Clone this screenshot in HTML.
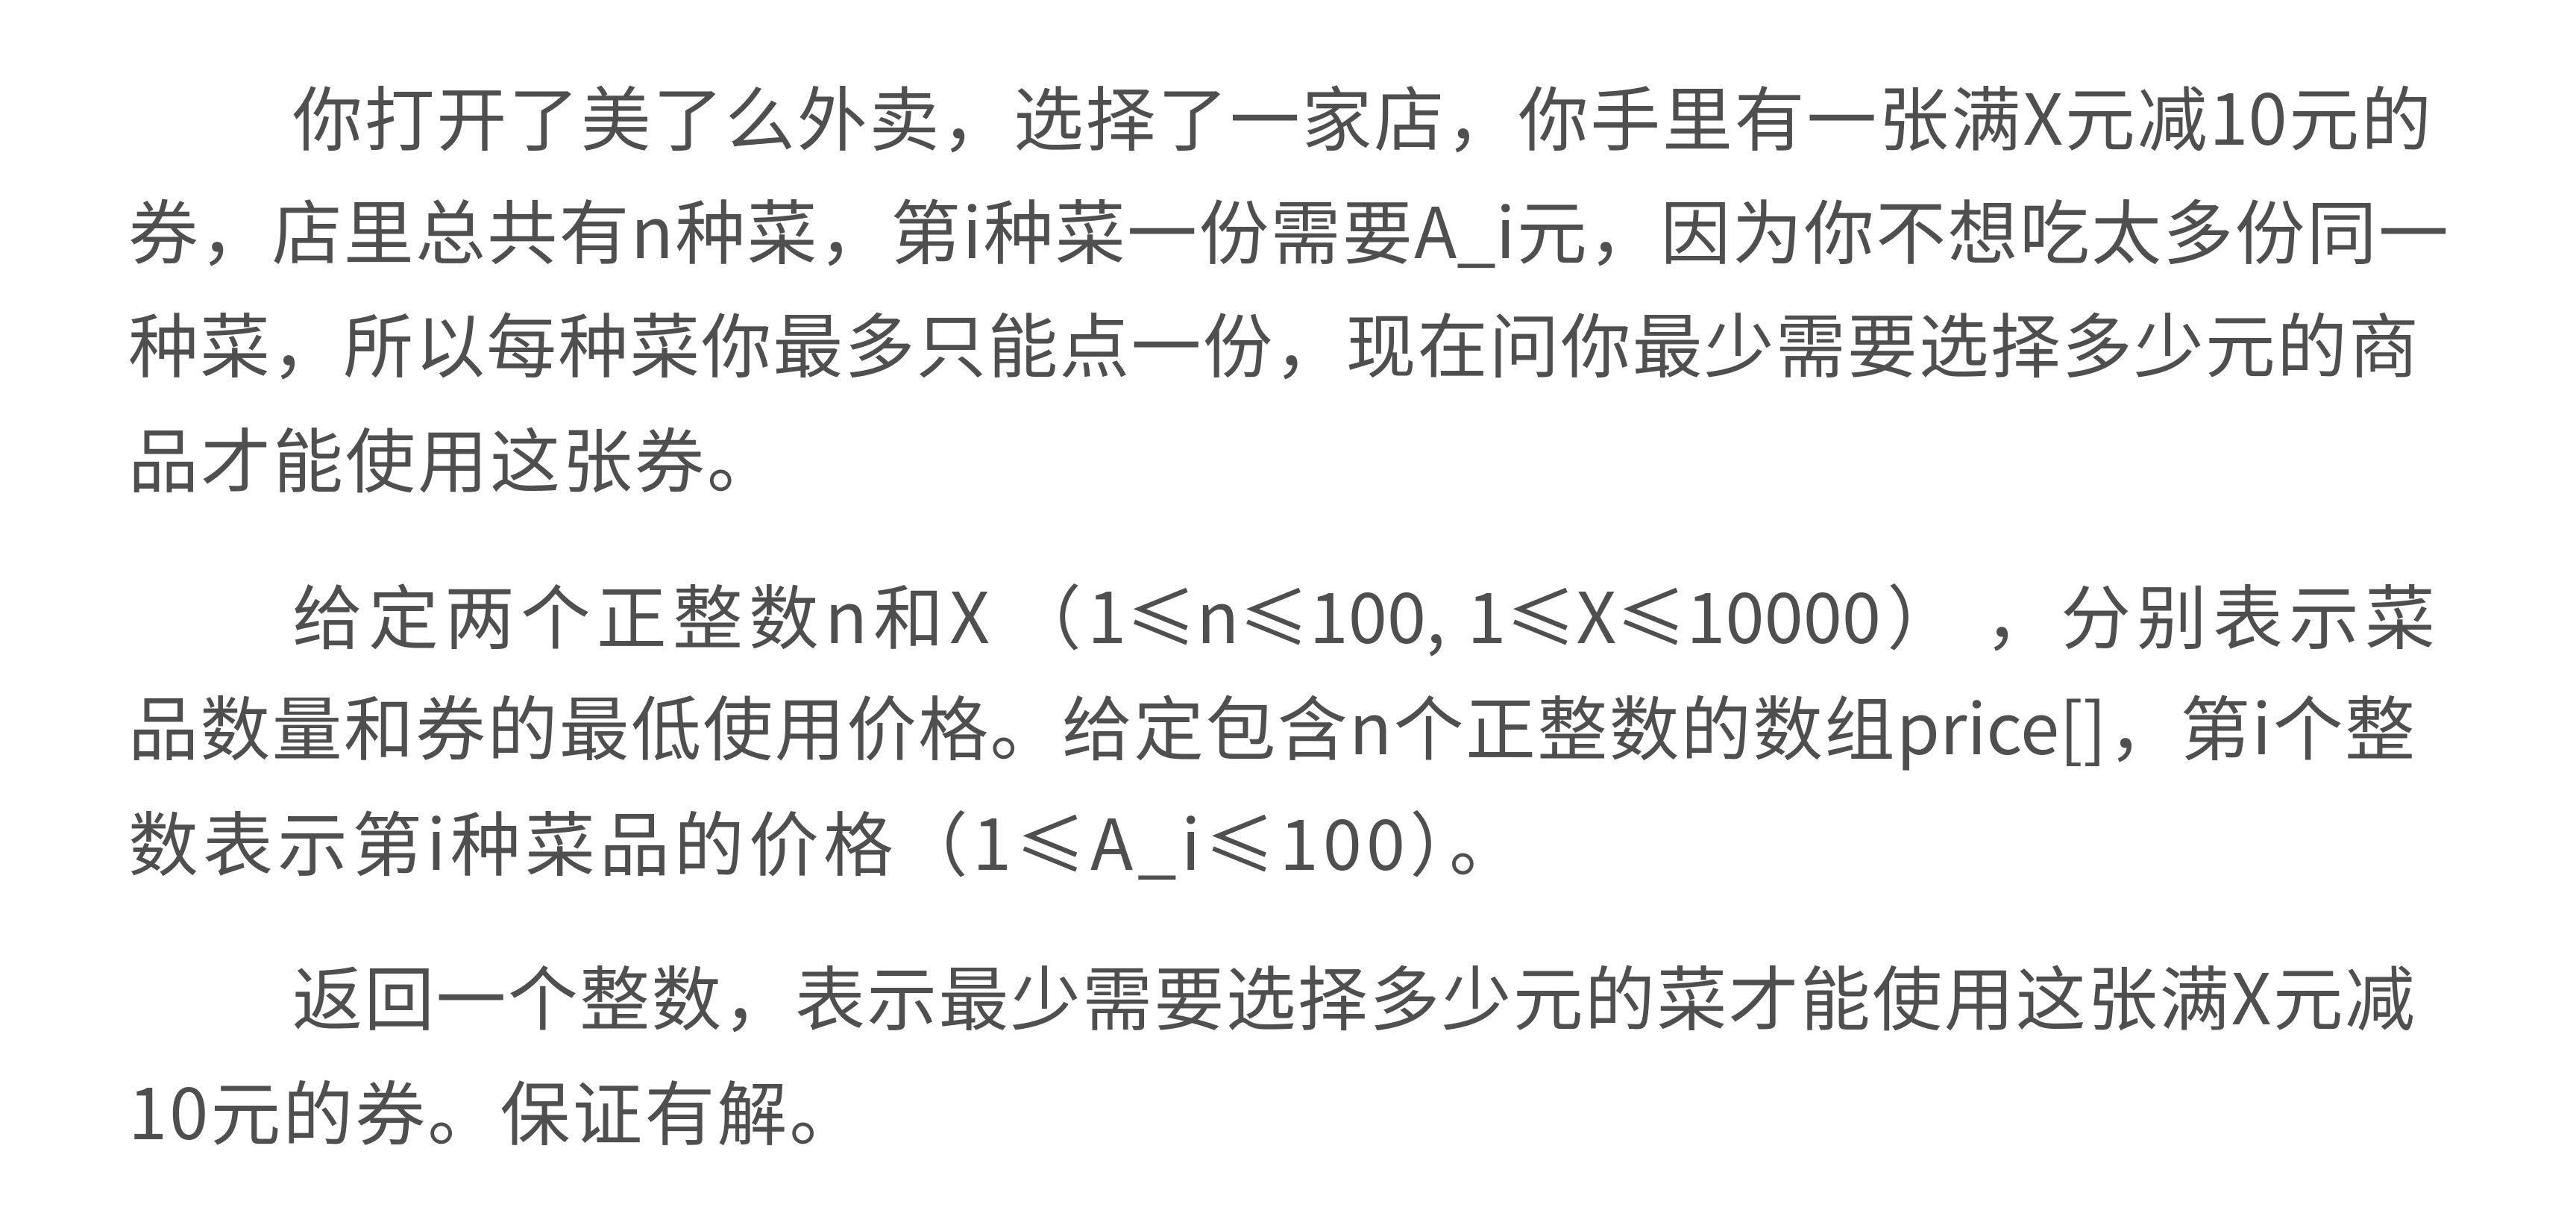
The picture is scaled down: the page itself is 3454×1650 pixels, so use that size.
<!DOCTYPE html>
<html><head><meta charset="utf-8"><style>
html,body{margin:0;padding:0;background:#fff;width:3454px;height:1650px;overflow:hidden}
.l{position:absolute;left:172px;white-space:nowrap;font-family:"Noto Sans CJK SC","Liberation Sans",sans-serif;font-size:94px;line-height:152px;height:152px;color:#4f4f4f;letter-spacing:3px}
.i{left:392px}
.j{text-align:justify;text-align-last:justify;letter-spacing:0}
</style></head><body>
<div class="l i j" style="top:78px;width:2868px">你打开了美了么外卖，选择了一家店，你手里有一张满X元减10元的</div>
<div class="l j" style="top:230px;width:3111px">券，店里总共有n种菜，第i种菜一份需要A_i元，因为你不想吃太多份同一</div>
<div class="l j" style="top:382px;width:3071px">种菜，所以每种菜你最多只能点一份，现在问你最少需要选择多少元的商</div>
<div class="l" style="top:536px">品才能使用这张券。</div>
<div class="l i j" style="top:746px;width:2873px">给定两个正整数n和X （1≤n≤100, 1≤X≤10000） ，分别表示菜</div>
<div class="l j" style="top:895px;width:3066px">品数量和券的最低使用价格。给定包含n个正整数的数组price[]，第i个整</div>
<div class="l" style="top:1050px;letter-spacing:6px">数表示第i种菜品的价格（1≤A_i≤100）。</div>
<div class="l i j" style="top:1257px;width:2846px">返回一个整数，表示最少需要选择多少元的菜才能使用这张满X元减</div>
<div class="l" style="top:1411px">10元的券。保证有解。</div>
</body></html>
